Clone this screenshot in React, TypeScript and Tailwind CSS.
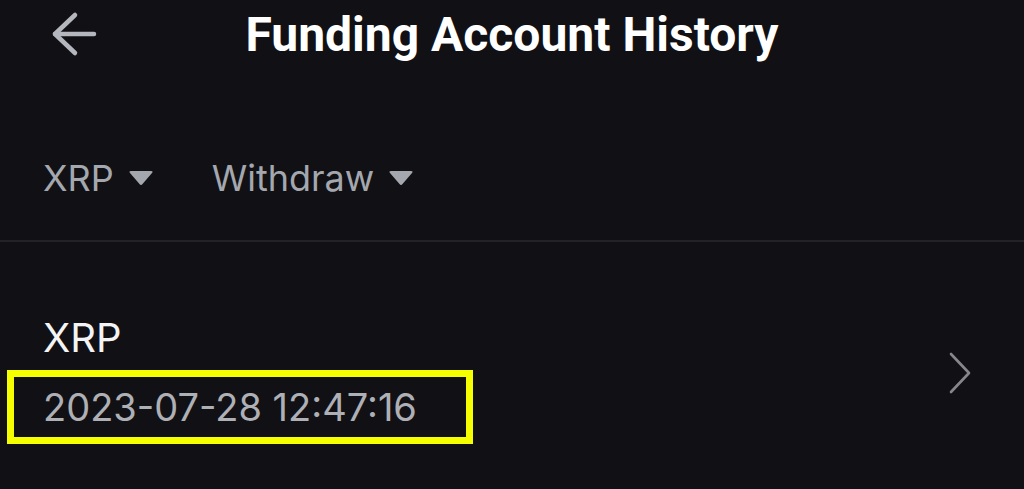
const Caret = () => (
  <svg width="26" height="18" viewBox="0 0 26 18" className="shrink-0">
    <path d="M3 2 H23 Q25.5 2 24 4 L14.5 15 Q13 16.8 11.5 15 L2 4 Q0.5 2 3 2 Z" fill="#a4a7ae" />
  </svg>
);

export default function App() {
  return (
    <div className="w-[1024px] h-[489px] bg-[#111115] flex flex-col overflow-hidden" style={{ fontFamily: 'Inter, "Noto Sans", sans-serif' }}>
      {/* Top bar */}
      <div className="h-[70px] grid grid-cols-[1fr_auto_1fr] items-center">
        <div className="pl-[50px] flex items-center">
          <svg width="48" height="48" viewBox="0 0 48 48" fill="none" stroke="#b4b7bd" strokeWidth="4.5" strokeLinecap="round" strokeLinejoin="round">
            <path d="M25 4 L5 23 L25 42" />
            <path d="M5 23 H44" />
          </svg>
        </div>
        <h1 className="text-[48px] font-bold text-white leading-none" style={{ fontFamily: 'Roboto, sans-serif' }}>
          Funding Account History
        </h1>
        <div />
      </div>

      {/* Filters */}
      <div className="h-[170px] flex items-center pl-[43px] pt-[46px] gap-[58px] text-[36px] text-[#a4a7ae] leading-none">
        <button className="flex items-center gap-[14px]">
          <span>XRP</span>
          <Caret />
        </button>
        <button className="flex items-center gap-[14px]">
          <span>Withdraw</span>
          <Caret />
        </button>
      </div>

      <div className="h-[2px] bg-[#222227]" />

      {/* Record row */}
      <div className="flex items-center justify-between pr-[52px] pt-[76px]">
        <div className="flex flex-col">
          <span className="pl-[43px] text-[40px] leading-none text-[#f4f4f5]">XRP</span>
          <div className="mt-[12px] ml-[7px] w-[466px] h-[74px] border-[7px] border-[#f5ff00] flex items-center pl-[29px]">
            <span className="text-[38px] leading-none text-[#aeb0b5]">2023-07-28 12:47:16</span>
          </div>
        </div>
        <svg className="mb-[16px]" width="24" height="44" viewBox="0 0 24 44" fill="none" stroke="#86868b" strokeWidth="2.6" strokeLinecap="round" strokeLinejoin="round">
          <path d="M3 3 L21 22 L3 41" />
        </svg>
      </div>
    </div>
  );
}
